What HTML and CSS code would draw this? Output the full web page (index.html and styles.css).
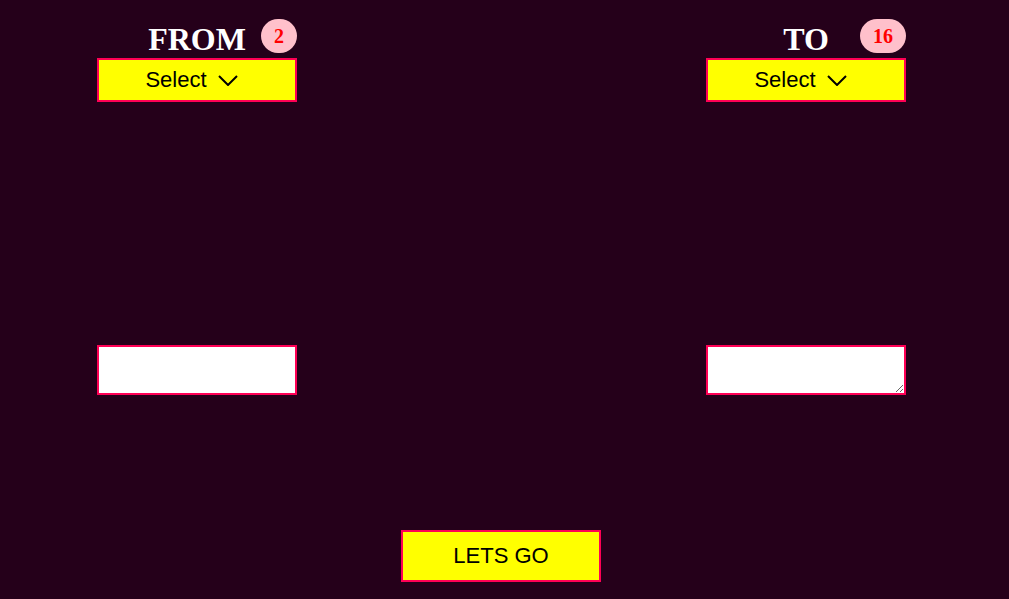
FILE: index.html
```html
<!DOCTYPE html>
<html lang="en">
<head>
<meta charset="utf-8">
<title>From / To</title>
<link rel="stylesheet" href="styles.css">
</head>
<body>
<main class="page">
  <div class="columns">
    <section class="col">
      <div class="head">
        <h1 class="title">FROM</h1>
        <span class="badge">2</span>
      </div>
      <div class="select">
        <span class="select-label">Select</span>
        <svg class="chev" width="20" height="11" viewBox="0 0 20 11"><polyline points="1,1 10,10 19,1" fill="none" stroke="#000" stroke-width="2"/></svg>
      </div>
      <input class="field" type="text">
    </section>
    <section class="col">
      <div class="head">
        <h1 class="title">TO</h1>
        <span class="badge">16</span>
      </div>
      <div class="select">
        <span class="select-label">Select</span>
        <svg class="chev" width="20" height="11" viewBox="0 0 20 11"><polyline points="1,1 10,10 19,1" fill="none" stroke="#000" stroke-width="2"/></svg>
      </div>
      <textarea class="field"></textarea>
    </section>
  </div>
  <div class="actions">
    <button class="go" type="button">LETS GO</button>
  </div>
</main>
</body>
</html>
```
FILE: styles.css
```css
html, body {
  margin: 0;
  padding: 0;
}
body {
  background: #25001a;
  font-family: "Liberation Sans", Arial, sans-serif;
  height: 599px;
  overflow: hidden;
}
.page {
  display: flex;
  flex-direction: column;
}
.columns {
  display: flex;
  justify-content: space-between;
  padding: 0 103px 0 97px;
}
.col {
  width: 200px;
  display: flex;
  flex-direction: column;
}
.head {
  position: relative;
  height: 58px;
  padding-top: 23px;
  box-sizing: border-box;
}
.title {
  margin: 0;
  font-family: "Liberation Serif", "Times New Roman", serif;
  font-size: 32px;
  line-height: 32px;
  font-weight: bold;
  color: #fff;
  text-align: center;
}
.badge {
  position: absolute;
  top: 19px;
  right: 0;
  background: #ffc0cb;
  color: #ff0000;
  font-family: "Liberation Serif", "Times New Roman", serif;
  font-weight: bold;
  font-size: 20px;
  line-height: 24px;
  padding: 5px 13px;
  border-radius: 17px;
}
.select {
  height: 44px;
  box-sizing: border-box;
  border: 2px solid #ff0055;
  background: #ffff00;
  display: flex;
  align-items: center;
  justify-content: center;
  gap: 11px;
  padding-right: 11px;
  color: #000;
  font-size: 22px;
}
.chev {
  display: block;
  margin-top: 1px;
}
.field {
  margin: 243px 0 0;
  width: 200px;
  height: 50px;
  box-sizing: border-box;
  border: 2px solid #ff0055;
  background: #fff;
  padding: 2px;
  display: block;
  font-size: 16px;
}
.actions {
  display: flex;
  justify-content: center;
  padding-right: 7px;
  margin-top: 135px;
}
.go {
  width: 200px;
  height: 52px;
  box-sizing: border-box;
  border: 2px solid #ff0055;
  background: #ffff00;
  color: #000;
  font-family: "Liberation Sans", Arial, sans-serif;
  font-size: 22px;
  padding: 0;
}
```
